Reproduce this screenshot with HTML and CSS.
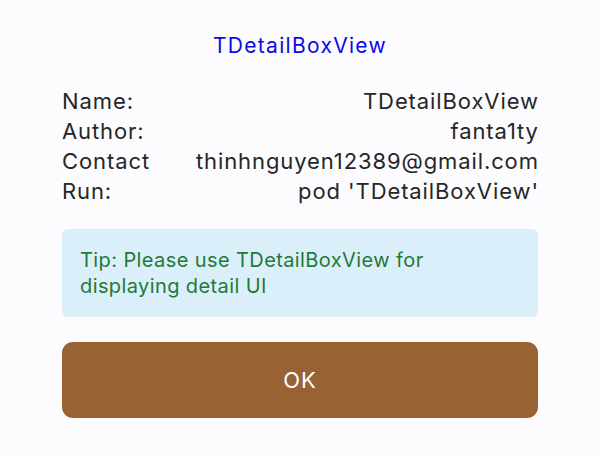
FILE: index.html
```html
<!DOCTYPE html>
<html>
<head>
<meta charset="utf-8">
<link rel="stylesheet" href="styles.css">
</head>
<body>
<div class="box">
  <h1 class="title">TDetailBoxView</h1>
  <div class="rows">
    <div class="row"><span>Name:</span><span>TDetailBoxView</span></div>
    <div class="row"><span>Author:</span><span>fanta1ty</span></div>
    <div class="row"><span>Contact</span><span>thinhnguyen12389@gmail.com</span></div>
    <div class="row"><span>Run:</span><span>pod 'TDetailBoxView'</span></div>
  </div>
  <div class="tip">Tip: Please use TDetailBoxView for displaying detail UI</div>
  <button class="ok">OK</button>
</div>
</body>
</html>
```
FILE: styles.css
```css
html, body {
  margin: 0;
  padding: 0;
  background: #fcfbfe;
}
.box {
  width: 600px;
  height: 456px;
  box-sizing: border-box;
  padding: 31px 62px 0;
  font-family: Inter, "Noto Sans", sans-serif;
  display: flex;
  flex-direction: column;
}
.title {
  margin: 0;
  font-size: 21px;
  font-weight: 400;
  letter-spacing: 1.3px;
  color: #0a0ae6;
  text-align: center;
  line-height: 30px;
}
.rows {
  margin-top: 25px;
  display: flex;
  flex-direction: column;
}
.row {
  display: flex;
  justify-content: space-between;
  font-size: 22px;
  letter-spacing: 0.9px;
  line-height: 30px;
  color: #262626;
}
.row span:last-child {
  margin-right: -0.9px;
}
.tip {
  margin-top: 23px;
  height: 88px;
  box-sizing: border-box;
  background: #dbeffb;
  border-radius: 6px;
  padding: 18px 18px 0;
  color: #1f7a36;
  font-size: 20px;
  letter-spacing: 0.4px;
  line-height: 26px;
}
.ok {
  margin-top: 25px;
  height: 76px;
  border: none;
  border-radius: 11px;
  background: #996233;
  color: #ffffff;
  font-family: Inter, "Noto Sans", sans-serif;
  font-size: 22px;
  letter-spacing: 1px;
  padding: 0;
}
```
